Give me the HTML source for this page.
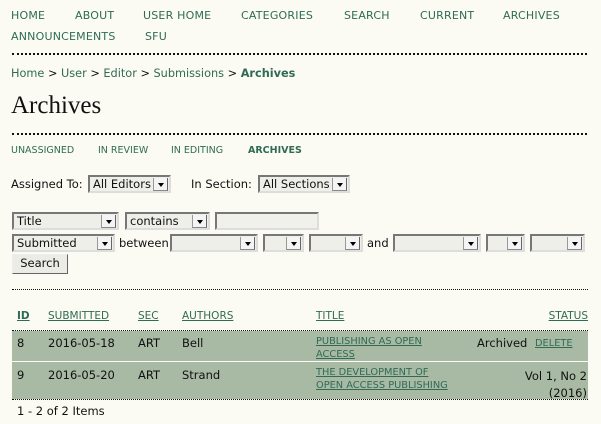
<!DOCTYPE html>
<html><head><meta charset="utf-8"><style>
body{margin:0;width:601px;height:424px;background:#fbfbf3;font-family:"DejaVu Sans","Liberation Sans",sans-serif;font-size:11.5px;color:#111;position:relative;overflow:hidden}
.a{position:absolute;white-space:nowrap}
.n{color:#2f6b55;font-size:11px;letter-spacing:0.2px}
.dots{position:absolute;left:12px;width:575px;border-top:2px dotted #111;height:0}
.d1{position:absolute;left:12px;width:576px;border-top:1px dotted #111;height:0}
.sel{position:absolute;height:18px;box-sizing:border-box;border:2px solid;border-color:#777 #ddd #ddd #777;background:#efefe9;font-size:11.5px;line-height:14px;padding-left:3px}
.sel.s:after{content:"";position:absolute;right:1px;top:1px;width:13px;height:12px;background:#f4f4f4;border-left:1px solid #999;border-bottom:1px solid #888;border-right:1px solid #666}
.sel i{position:absolute;right:5px;top:6px;border-left:3px solid transparent;border-right:3px solid transparent;border-top:4px solid #000;z-index:2}
.tab{color:#2f6b55;font-size:9.5px}
.h{color:#2f6b55;text-decoration:underline;font-size:10.5px}
.row{position:absolute;left:12px;width:576px;background:#a8b9a4}
.t{color:#2f6b55;text-decoration:underline;font-size:9.8px;line-height:13px}
</style></head><body>
<div class="a n" style="left:11px;top:9px">HOME</div>
<div class="a n" style="left:75px;top:9px">ABOUT</div>
<div class="a n" style="left:143px;top:9px">USER HOME</div>
<div class="a n" style="left:241px;top:9px">CATEGORIES</div>
<div class="a n" style="left:344px;top:9px">SEARCH</div>
<div class="a n" style="left:420px;top:9px">CURRENT</div>
<div class="a n" style="left:503px;top:9px">ARCHIVES</div>
<div class="a n" style="left:11px;top:30px">ANNOUNCEMENTS</div>
<div class="a n" style="left:145px;top:30px">SFU</div>
<div class="dots" style="top:53px"></div>
<div class="a" style="left:11px;top:67px;font-size:11.3px;color:#2f6b55">Home <span style="color:#111">&gt;</span> User <span style="color:#111">&gt;</span> Editor <span style="color:#111">&gt;</span> Submissions <span style="color:#111">&gt;</span> <b>Archives</b></div>
<div class="a" style="left:11px;top:92px;font-family:'Liberation Serif',serif;font-size:25px;color:#111">Archives</div>
<div class="dots" style="top:133px"></div>
<div class="a tab" style="left:11px;top:145px">UNASSIGNED</div>
<div class="a tab" style="left:98px;top:145px">IN REVIEW</div>
<div class="a tab" style="left:171px;top:145px">IN EDITING</div>
<div class="a tab" style="left:248px;top:145px;font-weight:bold">ARCHIVES</div>
<div class="a" style="left:11px;top:177px">Assigned To:</div>
<div class="sel s" style="left:88px;top:175px;width:83px">All Editors<i></i></div>
<div class="a" style="left:191px;top:177px">In Section:</div>
<div class="sel s" style="left:258px;top:175px;width:92px">All Sections<i></i></div>
<div class="sel s" style="left:12px;top:212px;width:107px">Title<i></i></div>
<div class="sel s" style="left:125px;top:212px;width:85px">contains<i></i></div>
<div class="sel" style="left:215px;top:212px;width:104px;background:#f1f1ec"></div>
<div class="sel s" style="left:12px;top:234px;width:103px">Submitted<i></i></div>
<div class="a" style="left:119px;top:236px">between</div>
<div class="sel s" style="left:170px;top:234px;width:88px"><i></i></div>
<div class="sel s" style="left:263px;top:234px;width:41px"><i></i></div>
<div class="sel s" style="left:309px;top:234px;width:54px"><i></i></div>
<div class="a" style="left:367px;top:236px">and</div>
<div class="sel s" style="left:393px;top:234px;width:88px"><i></i></div>
<div class="sel s" style="left:486px;top:234px;width:39px"><i></i></div>
<div class="sel s" style="left:530px;top:234px;width:55px"><i></i></div>
<div class="a" style="left:12px;top:254px;width:56px;height:20px;box-sizing:border-box;border:1px solid;border-color:#eee #666 #666 #eee;background:#ecece6;text-align:center;line-height:17px">Search</div>
<div class="d1" style="top:289px"></div>
<div class="a h" style="left:17px;top:310px;font-weight:bold">ID</div>
<div class="a h" style="left:48px;top:310px">SUBMITTED</div>
<div class="a h" style="left:138px;top:310px">SEC</div>
<div class="a h" style="left:182px;top:310px">AUTHORS</div>
<div class="a h" style="left:316px;top:310px">TITLE</div>
<div class="a h" style="right:13px;top:310px">STATUS</div>
<div class="d1" style="top:330px"></div>
<div class="row" style="top:331px;height:30px"></div>
<div style="position:absolute;left:12px;width:576px;top:361px;border-top:1px dotted #fff"></div>
<div class="row" style="top:362px;height:37px"></div>
<div class="d1" style="top:399px"></div>
<div class="a" style="left:17px;top:336px">8</div>
<div class="a" style="left:48px;top:336px">2016-05-18</div>
<div class="a" style="left:138px;top:336px">ART</div>
<div class="a" style="left:182px;top:336px">Bell</div>
<div class="a t" style="left:316px;top:335px">PUBLISHING AS OPEN<br>ACCESS</div>
<div class="a" style="left:477px;top:336px">Archived</div>
<div class="a t" style="left:535px;top:337px">DELETE</div>
<div class="a" style="left:17px;top:368px">9</div>
<div class="a" style="left:48px;top:368px">2016-05-20</div>
<div class="a" style="left:138px;top:368px">ART</div>
<div class="a" style="left:182px;top:368px">Strand</div>
<div class="a t" style="left:316px;top:366px">THE DEVELOPMENT OF<br>OPEN ACCESS PUBLISHING</div>
<div class="a" style="right:14px;top:368px;text-align:right;line-height:17px">Vol 1, No 2<br>(2016)</div>
<div class="a" style="left:17px;top:404px">1 - 2 of 2 Items</div>
</body></html>
